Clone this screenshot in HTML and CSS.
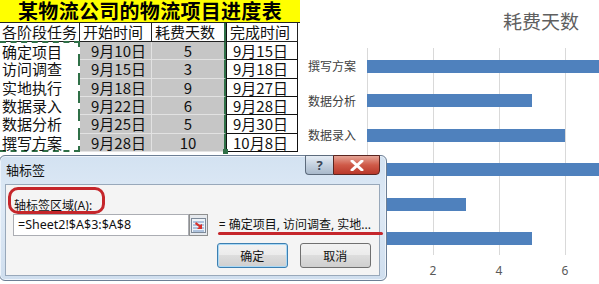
FILE: index.html
```html
<!DOCTYPE html>
<html lang="zh-CN">
<head>
  <meta charset="UTF-8" />
  <title>物流项目进度表 - 轴标签</title>
  <link rel="stylesheet" href="styles.css">
</head>
<body>
  <div class="page">

    <!-- 工作表区域 -->
    <div class="sheet">
      <div class="grid">
        <div class="title">某物流公司的物流项目进度表</div>

        <div class="cell head a">各阶段任务</div>
        <div class="cell head b">开始时间</div>
        <div class="cell head c">耗费天数</div>
        <div class="cell head d">完成时间</div>

        <div class="cell a first">确定项目</div>
        <div class="cell b">9月10日</div>
        <div class="cell c">5</div>
        <div class="cell d">9月15日</div>

        <div class="cell a">访问调查</div>
        <div class="cell b">9月15日</div>
        <div class="cell c">3</div>
        <div class="cell d">9月18日</div>

        <div class="cell a">实地执行</div>
        <div class="cell b">9月18日</div>
        <div class="cell c">9</div>
        <div class="cell d">9月27日</div>

        <div class="cell a">数据录入</div>
        <div class="cell b">9月22日</div>
        <div class="cell c">6</div>
        <div class="cell d">9月28日</div>

        <div class="cell a">数据分析</div>
        <div class="cell b">9月25日</div>
        <div class="cell c">5</div>
        <div class="cell d">9月30日</div>

        <div class="cell a last">撰写方案</div>
        <div class="cell b">9月28日</div>
        <div class="cell c last">10</div>
        <div class="cell d">10月8日</div>
      </div>
    </div>

    <!-- 图表 -->
    <div class="chart">
      <div class="chart-title">耗费天数</div>
      <div class="plot">
        <div class="cats">
          <div class="cat">撰写方案</div>
          <div class="cat">数据分析</div>
          <div class="cat">数据录入</div>
          <div class="cat">实地执行</div>
          <div class="cat">访问调查</div>
          <div class="cat">确定项目</div>
        </div>
        <div class="bars">
          <div class="slot"><div class="bar" style="width: 330px"></div></div>
          <div class="slot"><div class="bar" style="width: 165px"></div></div>
          <div class="slot"><div class="bar" style="width: 198px"></div></div>
          <div class="slot"><div class="bar" style="width: 297px"></div></div>
          <div class="slot"><div class="bar" style="width: 99px"></div></div>
          <div class="slot"><div class="bar" style="width: 165px"></div></div>
        </div>
      </div>
      <div class="axis">
        <span>0</span><span>2</span><span>4</span><span>6</span>
      </div>
    </div>

    <!-- 轴标签对话框 -->
    <div class="dialog">
      <div class="dlg-titlebar">
        <span class="dlg-title">轴标签</span>
        <div class="caption-btns">
          <span class="cap-help">?</span>
          <span class="cap-close">
            <svg width="14" height="11" viewBox="0 0 14 11">
              <path d="M2 1 L12 10 M12 1 L2 10" stroke="#fff" stroke-width="3" stroke-linecap="round"/>
            </svg>
          </span>
        </div>
      </div>
      <div class="dlg-body">
        <div class="field-label">轴标签区域(<u>A</u>):</div>
        <div class="field-row">
          <div class="input">=Sheet2!$A$3:$A$8</div>
          <span class="range-btn">
            <svg width="17" height="19" viewBox="0 0 17 19">
              <rect x="1.5" y="2.5" width="14" height="14" fill="#eef3f8" stroke="#7d8a99"/>
              <path d="M3 6 H14 M3 9 H14 M3 12 H14 M3 15 H14" stroke="#6f93c4" stroke-width="1"/>
              <path d="M6 6 L10 9 L12 8 L12 13 L7 13 L9 11 L5 8 Z" fill="#d8322c"/>
            </svg>
          </span>
          <span class="preview">= 确定项目, 访问调查, 实地...</span>
        </div>
        <div class="actions">
          <button class="btn default">确定</button>
          <button class="btn">取消</button>
        </div>
        <!-- 红色标注 -->
        <span class="mark-oval"></span>
        <span class="mark-line"></span>
      </div>
    </div>

  </div>
</body>
</html>
```

FILE: styles.css
```css
/* 页面 */
body {
  margin: 0;
  background: #fff;
  font-family: "Noto Sans CJK SC", sans-serif;
}

.page {
  position: relative;
  display: flex;
  width: 599px;
  height: 284px;
  overflow: hidden;
}

/* 工作表 */
.sheet {
  width: 300px;
  flex: none;
}

.grid {
  display: grid;
  grid-template-columns: 80px 72px 74px 72px 2px;
  grid-template-rows: 23px 19px repeat(6, 18.33px);
}

.title {
  grid-column: 1 / -1;
  box-sizing: border-box;
  background: #ffff00;
  border-bottom: 1px solid #222;
  font-size: 20px;
  font-weight: 700;
  line-height: 22px;
  text-align: center;
  letter-spacing: 0.3px;
}

.cell {
  box-sizing: border-box;
  font-size: 15px;
  line-height: 17px;
  color: #111;
  white-space: nowrap;
  border-bottom: 1px solid #e2e2e2;
  border-right: 1px solid #e2e2e2;
}

.a { grid-column: 1; padding-left: 2px; }
.b { grid-column: 2; background: #c6c6c6; text-align: right; padding-right: 5px; }
.c { grid-column: 3; background: #c6c6c6; text-align: center; border-right: 2px solid #2f7047; }
.d { grid-column: 4; text-align: right; padding-right: 9px; border: 1px solid #111; border-top: none; }

.head {
  background: #fff;
  text-align: left;
  padding-left: 3px;
  border-bottom: 1px solid #222;
  border-right: 1px solid #222;
}
.head.a { padding-left: 2px; border-right: 1px solid #222; }
.head.c { border-right: 2px solid #2f7047; }

.a:not(.head) {
  border-bottom: none;
  border-right: 2px dashed #2f7047;
}
.a.first { border-top: 2px dashed #2f7047; margin-top: -1px; }
.a.last { border-bottom: 2px dashed #2f7047; }

.c.last { position: relative; }
.c.last::after {
  content: "";
  position: absolute;
  right: -4px;
  bottom: -3px;
  width: 5px;
  height: 5px;
  background: #2f7047;
}

/* 图表 */
.chart {
  width: 299px;
  flex: none;
  display: flex;
  flex-direction: column;
  color: #595959;
}

.chart-title {
  height: 48px;
  box-sizing: border-box;
  padding: 10px 0 0 203px;
  font-size: 19px;
  line-height: 22px;
  color: #5f5f5f;
}

.plot {
  display: flex;
  height: 207px;
}

.cats {
  width: 67px;
  flex: none;
}

.cat {
  height: 34.5px;
  line-height: 36px;
  padding-left: 8px;
  font-size: 12px;
  color: #404040;
}

.bars {
  flex: 1;
  overflow: hidden;
  background: repeating-linear-gradient(to right, #d9d9d9 0 1px, transparent 1px 66px);
}

.slot {
  height: 34.5px;
  display: flex;
  align-items: center;
}

.bar {
  height: 13px;
  margin-top: 2px;
  background: #4f81bd;
  flex: none;
}

.axis {
  display: flex;
  margin-left: 34px;
  padding-top: 10px;
  font-family: "Noto Sans", sans-serif;
  font-size: 12px;
  line-height: 12px;
}

.axis span {
  width: 66px;
  flex: none;
  text-align: center;
}

/* 对话框 */
.dialog {
  position: absolute;
  left: -1px;
  top: 155px;
  width: 388px;
  height: 126px;
  box-sizing: border-box;
  padding: 0 6px 4px 5px;
  display: flex;
  flex-direction: column;
  background: linear-gradient(#d3e2f1, #dfeaf6 40%, #cfdeee);
  border: 1px solid #6d7f95;
  border-radius: 6px;
  box-shadow: inset 0 0 0 1px #eef4fb;
}

.dlg-titlebar {
  height: 28px;
  flex: none;
  display: flex;
  justify-content: space-between;
}

.dlg-title {
  padding: 6px 0 0 1px;
  font-size: 13px;
  line-height: 16px;
  color: #111;
}

.caption-btns {
  display: flex;
  height: 20px;
  margin-top: -1px;
}

.cap-help,
.cap-close {
  display: flex;
  align-items: center;
  justify-content: center;
  box-sizing: border-box;
  height: 20px;
  border: 1px solid #5d6b7c;
}

.cap-help {
  width: 28px;
  border-right: none;
  border-radius: 0 0 0 4px;
  background: linear-gradient(#e6edf5, #c4d1df 50%, #a9b9cb);
  font-family: "Noto Sans", sans-serif;
  font-size: 13px;
  font-weight: 700;
  color: #3b4656;
}

.cap-close {
  width: 47px;
  border-color: #5a2520;
  border-radius: 0 0 4px 0;
  background: linear-gradient(#e6a597, #cf5a48 50%, #b9382a);
}

.dlg-body {
  position: relative;
  flex: 1;
  box-sizing: border-box;
  padding: 12px 8px 0 7px;
  background: #f4f4f4;
  border: 1px solid #98a8ba;
  font-family: "Noto Sans", "Noto Sans CJK SC", sans-serif;
  font-size: 12px;
  color: #111;
}

.field-label {
  height: 17px;
  padding-left: 1px;
  line-height: 17px;
}

.field-row {
  display: flex;
  align-items: center;
  height: 22px;
}

.input {
  width: 180px;
  height: 22px;
  box-sizing: border-box;
  padding-left: 4px;
  background: #fff;
  border: 1px solid #abadb3;
  line-height: 20px;
  font-size: 12.5px;
}

.range-btn {
  display: flex;
  align-items: center;
  justify-content: center;
  width: 19px;
  height: 22px;
  box-sizing: border-box;
  border: 1px solid #8e8f8f;
  background: #e6e9ed;
}

.preview {
  margin-left: 11px;
  white-space: nowrap;
  line-height: 16px;
}

.actions {
  display: flex;
  gap: 12px;
  margin: 7px 0 0 204px;
}

.btn {
  width: 73px;
  height: 25px;
  padding: 0;
  font: inherit;
  color: #111;
  border: 1px solid #707070;
  border-radius: 3px;
  background: linear-gradient(#f2f2f2 0, #ebebeb 50%, #dddddd 50%, #cfcfcf 100%);
}

.btn.default {
  width: 72px;
  border-color: #3c7fb1;
  box-shadow: inset 0 0 0 1px #a9d8f5;
}

.mark-oval {
  position: absolute;
  left: 2px;
  top: 2px;
  width: 97px;
  height: 27px;
  box-sizing: border-box;
  border: 3px solid #c5262b;
  border-radius: 10px;
}

.mark-line {
  position: absolute;
  left: 212px;
  top: 47px;
  width: 165px;
  height: 3px;
  border-radius: 2px;
  background: #c5262b;
}
```
